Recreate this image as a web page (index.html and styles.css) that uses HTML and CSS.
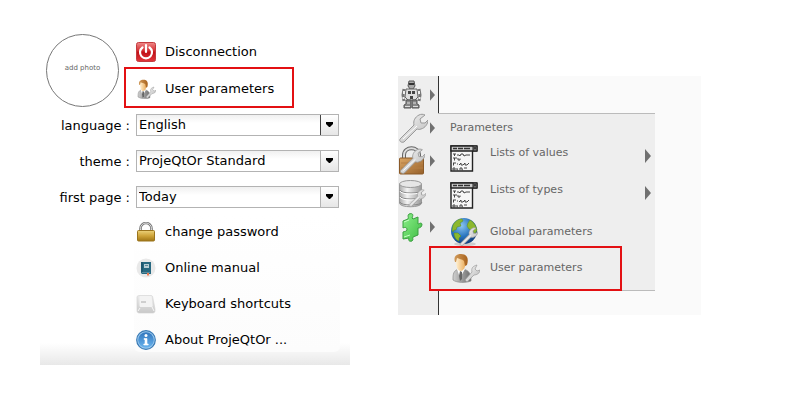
FILE: index.html
```
<!DOCTYPE html>
<html lang="en">
<head>
<meta charset="utf-8">
<title>User parameters</title>
<link rel="stylesheet" href="styles.css">
</head>
<body>
<svg class="defs" width="0" height="0" aria-hidden="true">
  <defs>
    <linearGradient id="red" x1="0" y1="0" x2="0" y2="1"><stop offset="0" stop-color="#ef8a8a"/><stop offset=".45" stop-color="#d42a2e"/><stop offset=".5" stop-color="#c00f16"/><stop offset="1" stop-color="#e2383c"/></linearGradient>
    <linearGradient id="gold" x1="0" y1="0" x2="0" y2="1"><stop offset="0" stop-color="#ecd27a"/><stop offset=".5" stop-color="#cfa53a"/><stop offset="1" stop-color="#a07514"/></linearGradient>
    <linearGradient id="bronze" x1="0" y1="0" x2="1" y2="1"><stop offset="0" stop-color="#dca765"/><stop offset="1" stop-color="#96602a"/></linearGradient>
    <linearGradient id="steel" x1="0" y1="0" x2="1" y2="1"><stop offset="0" stop-color="#fafafa"/><stop offset="1" stop-color="#b5b5b5"/></linearGradient>
    <linearGradient id="drum" x1="0" y1="0" x2="1" y2="0"><stop offset="0" stop-color="#aaa"/><stop offset=".35" stop-color="#f3f3f3"/><stop offset="1" stop-color="#999"/></linearGradient>
    <linearGradient id="blue" x1="0" y1="0" x2="0" y2="1"><stop offset="0" stop-color="#3176bd"/><stop offset="1" stop-color="#6ab4ee"/></linearGradient>
    <linearGradient id="key" x1="0" y1="0" x2="0" y2="1"><stop offset="0" stop-color="#ececec"/><stop offset="1" stop-color="#c9c9c9"/></linearGradient>
    <radialGradient id="sea" cx=".4" cy=".3" r=".7"><stop offset="0" stop-color="#8cc6f2"/><stop offset=".6" stop-color="#2873bd"/><stop offset="1" stop-color="#12417f"/></radialGradient>
    <linearGradient id="face" x1="0" y1="0" x2="1" y2="0"><stop offset="0" stop-color="#fff0d2"/><stop offset="1" stop-color="#e8a650"/></linearGradient>
    <linearGradient id="hair" x1="0" y1="0" x2="1" y2="0"><stop offset="0" stop-color="#d09a5a"/><stop offset="1" stop-color="#a8621c"/></linearGradient>
    <linearGradient id="suit" x1="0" y1="0" x2="1" y2="0"><stop offset="0" stop-color="#d0d0d0"/><stop offset="1" stop-color="#6b6b6b"/></linearGradient>
    <linearGradient id="green" x1="0" y1="0" x2="1" y2="1"><stop offset="0" stop-color="#8df08a"/><stop offset="1" stop-color="#3dbb42"/></linearGradient>
  </defs>
  <symbol id="spanner" viewBox="0 0 30 30">
    <path d="M2 26 16 12C15 8 17 4 21 2c2-1 4-1 6 0l-5 4 1 4 4 0 3-3c0 4-3 8-7 9-2 1-3 0-4 0L6 29c-3 1-5-1-4-3Z" fill="url(#steel)" stroke="#999" stroke-width="1"/>
    <path d="M5 26 19 13" stroke="#fff" stroke-width="1" fill="none"/>
  </symbol>
  <symbol id="user" viewBox="0 0 30 30">
    <path d="M3 25c0-6 2-8 6-9h4c5 1 8 4 8 10v2c-5 2-14 2-18-1Z" fill="url(#suit)" stroke="#888" stroke-width=".7"/>
    <path d="m7 16 3 9 5-9Z" fill="#fff"/><path d="m10 18 2 1v7l-2 2-1-5Z" fill="#666"/>
    <path d="M6 7c0-4 2-5 6-5 4 0 5 3 4 8-1 5-3 8-5 8-4 0-5-5-5-11Z" fill="url(#face)"/>
    <path d="M5 9C3 3 7 1 11 1c6 0 8 4 6 11l-2 1-1-5C12 6 9 6 7 5L6 9Z" fill="url(#hair)"/>
    <path d="m15 27 7-8c-1-4 1-6 5-7l-2 4 2 2 3-1c0 3-3 5-6 5l-7 7Z" fill="url(#steel)" stroke="#999" stroke-width=".7"/>
  </symbol>
  <symbol id="list" viewBox="0 0 28 28">
    <path d="M1 1h21.500v25H1Z" fill="#f6f6f6" stroke="#222" stroke-width="1.400"/>
    <path d="M1 1h26v5H1Z" fill="#ccc" stroke="#222" stroke-width="1.400"/>
    <path d="M23 1h4v5h-4Z" fill="#777" stroke="#222"/><path d="M24 2.500h2l-1 2Z" fill="#000"/>
    <path d="M3 3.500h4M8 3.500h5M14 3.500h6" stroke="#333" stroke-width="1.500"/>
    <g fill="none" stroke="#444" stroke-width="1"><path d="M3 9h3M4.500 9v2M7 10h2l1 1 1-2h2l1 2 2-1h4M3 13h4M4.500 13v2.500M8 13v2h2v-1.500M3 18h3M3.500 18v2.500M7 19h1M9 20l2-2v2h2l2-2v2h2l2-2M3 23h2v2H3ZM7 23v2h1M10 25v-2h2v2h1M14 23h3"/></g>
  </symbol>
  <symbol id="arrow" viewBox="0 0 6 14"><path d="M0 0 6 7 0 14Z" fill="#707070"/></symbol>
</svg>

<main class="page">
  <section class="account">
    <div class="profile">
      <button class="photo" type="button">add photo</button>
      <div class="profile-links">
        <a class="item" href="#disconnect">
          <svg class="icon" viewBox="0 0 20 20"><rect x=".5" y=".5" width="19" height="19" rx="2" fill="url(#red)" stroke="#c43b3f"/><path d="M6.500 5.500a6 6 0 1 0 7 0" fill="none" stroke="#fff" stroke-width="2.200" stroke-linecap="round"/><path d="M10 3v7" stroke="#fff" stroke-width="2.200" stroke-linecap="round"/></svg>
          Disconnection
        </a>
        <a class="item item-marked" href="#user">
          <svg class="icon"><use href="#user"/></svg>
          User parameters
        </a>
      </div>
    </div>

    <form class="settings">
      <label for="language">language&nbsp;:</label>
      <span class="combo"><select id="language"><option>English</option></select><svg class="combo-arrow combo-active" viewBox="0 0 17 20"><path d="M5 7h7v2L9 12H8L5 9Z"/></svg></span>
      <label for="theme">theme&nbsp;:</label>
      <span class="combo"><select id="theme"><option>ProjeQtOr Standard</option></select><svg class="combo-arrow" viewBox="0 0 17 20"><path d="M5 7h7v2L9 12H8L5 9Z"/></svg></span>
      <label for="first">first page&nbsp;:</label>
      <span class="combo"><select id="first"><option>Today</option></select><svg class="combo-arrow" viewBox="0 0 17 20"><path d="M5 7h7v2L9 12H8L5 9Z"/></svg></span>
    </form>

    <nav class="links">
      <a class="item" href="#password">
        <svg class="icon" viewBox="0 0 20 20"><path d="M4.500 10V6.500a5.500 5.500 0 0 1 11 0V10" fill="none" stroke="#777" stroke-width="2.600"/><path d="M4.500 10V6.500a5.500 5.500 0 0 1 11 0V10" fill="none" stroke="#ddd" stroke-width="1"/><rect x="1.500" y="8.500" width="17" height="10.500" rx="1" fill="url(#gold)" stroke="#9a741d"/></svg>
        change password
      </a>
      <a class="item" href="#manual">
        <svg class="icon" viewBox="0 0 20 20"><circle cx="10" cy="10" r="9.500" fill="#e9e9e9"/><path d="M5 4h10v12H6l-1-1Z" fill="#286981"/><path d="M6 4v10" stroke="#174b60"/><path d="M8 6h5v4H8Z" fill="#b9ced5"/><path d="M9 7.500h3M6 14.500h8" stroke="#5c8b9b"/><path d="M11 15h2v3l-1-1-1 1Z" fill="#ee7950"/></svg>
        Online manual
      </a>
      <a class="item" href="#keyboard">
        <svg class="icon" viewBox="0 0 20 20"><path d="M4 1.500h11c1 0 1.500.5 1.700 1.500l2.300 12v2c0 1-1 2-2 2H3c-1 0-2-1-2-2V3c0-1 1-1.500 3-1.500Z" fill="url(#key)" stroke="#d2d2d2" stroke-width=".6"/><path d="M4.500 2H14c1 0 1.500.5 1.700 1.500l1 8c0 1-.5 1.500-1.500 1.500H5c-1 0-1.500-.5-1.500-1.500v-8c0-1 .5-1.500 1-1.500Z" fill="#f3f3f3"/><path d="M5 8h5" stroke="#aaa" stroke-width="1"/><path d="m16 13 2 4M4 14l-2 3" stroke="#f7f7f7"/></svg>
        Keyboard shortcuts
      </a>
      <a class="item" href="#about">
        <svg class="icon" viewBox="0 0 20 20"><circle cx="10" cy="10" r="9.300" fill="#9ecbef" stroke="#397ab5" stroke-width="1.200"/><circle cx="10" cy="10" r="7.800" fill="url(#blue)"/><circle cx="10" cy="5.500" r="1.500" fill="#fff"/><path d="M8 8.500h3v5.500h1.200v1H7.800v-1H9V9.500H8Z" fill="#fff" stroke="#fff" stroke-width=".6"/></svg>
        About ProjeQtOr ...
      </a>
    </nav>
  </section>

  <section class="workspace">
    <nav class="sidebar">
      <a class="tool" href="#automation" aria-label="Automation">
        <svg class="tool-icon" viewBox="0 0 30 30"><path d="M11 1h5l1 5-2 3h-3l-2-3Z" fill="#aaa" stroke="#555"/><path d="M11 4h5" stroke="#333" stroke-width="2"/><path d="M8 9h11l1 8-3 3h-7l-3-3Z" fill="#ddd" stroke="#666"/><path d="M10 11h3v3h-3ZM14 11h3v3h-3ZM12 16h3v3h-3Z" fill="#444"/><path d="M6 9 5 15l1 6M21 9l1 6-1 6" fill="none" stroke="#777" stroke-width="3"/><path d="M6 11v3M21 11v3M5.500 17v2M21.500 17v2" stroke="#eee" stroke-width="2"/><path d="M8 20h5v8H6v-3l2-1ZM14 20h5v4l2 1v3h-7Z" fill="#888" stroke="#555"/><path d="M9 23h3M15 23h3M7 26.500h5M15 26.500h5" stroke="#ddd"/></svg>
        <svg class="arrow"><use href="#arrow"/></svg>
      </a>
      <a class="tool" href="#parameters" aria-label="Parameters">
        <svg class="tool-icon"><use href="#spanner"/></svg>
        <svg class="arrow"><use href="#arrow"/></svg>
      </a>
      <a class="tool" href="#rights" aria-label="Access rights">
        <svg class="tool-icon" viewBox="0 0 30 30"><path d="M6 13V9c0-9 15-9 15 0v4" fill="none" stroke="#666" stroke-width="4"/><path d="M6 13V9c0-9 15-9 15 0v4" fill="none" stroke="#ddd" stroke-width="2"/><rect x="1.500" y="12" width="24" height="16" rx="1" fill="url(#bronze)" stroke="#8b5a28"/><path d="M3 17h22M3 22h22" stroke="#b57e44"/><use href="#spanner" x="1" y="2" width="26" height="26"/></svg>
        <svg class="arrow"><use href="#arrow"/></svg>
      </a>
      <a class="tool" href="#data" aria-label="Data">
        <svg class="tool-icon" viewBox="0 0 30 30"><path d="M1.500 5v19c0 5 22 5 22 0V5Z" fill="url(#drum)" stroke="#999"/><ellipse cx="12.500" cy="5" rx="11" ry="3.500" fill="#e6e6e6" stroke="#999"/><path d="M2 11c0 4 22 4 22 0M2 17c0 4 22 4 22 0M2 23c0 4 22 4 22 0" fill="none" stroke="#888"/><path d="M2 12c0 4 22 4 22 0M2 18c0 4 22 4 22 0" fill="none" stroke="#fff"/><use href="#spanner" x="10" y="10" width="18" height="18"/></svg>
      </a>
      <a class="tool" href="#plugins" aria-label="Plugins">
        <svg class="tool-icon" viewBox="0 0 30 30"><path d="m5 9 5-2c1-2-1-3 1-5 3-1 5 0 3 4l1 1 5-2v7c1 0 3-2 4 0 0 3-2 4-4 4v7l-5 2c-1 2 1 2-1 4-3 1-4-1-3-3l-6 1v-7c2-1 3 0 4-2 0-3-2-3-4-2Z" fill="url(#green)" stroke="#3b9f40"/><path d="m6 10 5-2M12 23l-6 2" stroke="#c4ffc2"/></svg>
        <svg class="arrow"><use href="#arrow"/></svg>
      </a>
    </nav>

    <nav class="submenu">
      <h2 class="submenu-title">Parameters</h2>
      <a class="entry entry-list" href="#values"><svg class="list-icon"><use href="#list"/></svg><span class="entry-text">Lists of values</span><svg class="arrow"><use href="#arrow"/></svg></a>
      <a class="entry entry-list" href="#types"><svg class="list-icon"><use href="#list"/></svg><span class="entry-text">Lists of types</span><svg class="arrow"><use href="#arrow"/></svg></a>
      <a class="entry" href="#global">
        <svg class="entry-icon" viewBox="0 0 30 30"><ellipse cx="15" cy="27" rx="11" ry="2" fill="#ccc"/><circle cx="14" cy="14" r="13" fill="url(#sea)"/><path d="M3 8c3-5 6-6 9-6l1 2-3 2 1 3-4 1-1 3-2 0-1 2-1-2ZM4 16l4 0 3 3-2 2 0 3c-3-1-5-4-5-8ZM18 6l2-3c4 2 6 6 7 10l-2 4-3-4-3-1-2-3Z" fill="#8cb82e" stroke="#588a21" stroke-width=".5"/><use href="#spanner" x="9" y="10" width="19" height="19"/></svg>
        <span class="entry-text">Global parameters</span>
      </a>
      <a class="entry entry-marked" href="#user"><svg class="entry-icon"><use href="#user"/></svg><span class="entry-text">User parameters</span></a>
    </nav>
  </section>
</main>
</body>
</html>
```
FILE: styles.css
```
* { box-sizing: border-box; }
body {
  margin: 0;
  background: #fff;
  color: #000;
  font: 13px/16px "DejaVu Sans", sans-serif;
}
a { color: inherit; text-decoration: none; }
svg { display: block; flex: none; }
.defs { position: absolute; }

.page {
  display: grid;
  grid-template-columns: 310fr 303fr;
  gap: 48px;
  align-items: start;
  padding: 34px 99px 35px 40px;
}

.account {
  padding-bottom: 13px;
  background: linear-gradient(to top, #e8e8e8, #fff 22px);
}
.profile { display: flex; gap: 5px; padding-left: 6px; }
.photo {
  flex: none;
  width: 73px;
  height: 73px;
  padding: 0 0 6px;
  border: 1px solid #777;
  border-radius: 50%;
  background: #fff;
  color: #666;
  font: 7px/10px "DejaVu Sans", sans-serif;
}
.item {
  display: flex;
  align-items: center;
  gap: 9px;
  height: 24px;
  white-space: nowrap;
}
.icon { width: 20px; height: 20px; }
.profile-links .item { height: 33px; padding: 2px 12px 0; }
.profile-links .item-marked {
  width: 170px;
  height: 41px;
  padding: 2px 10px 0;
  border: 2px solid #e31013;
}

.settings {
  display: grid;
  grid-template-columns: 90px 1fr;
  gap: 14px 6px;
  align-items: center;
  padding: 6px 11px 6px 0;
}
.settings label { padding-top: 2px; text-align: right; white-space: nowrap; }
.combo {
  display: flex;
  height: 22px;
  border: 1px solid #b3b3b3;
  background: linear-gradient(#f0f0f0, #fff 8px);
}
.combo select {
  flex: 1;
  min-width: 0;
  padding: 0 2px;
  border: 0;
  appearance: none;
  background: none;
  color: #000;
  font: inherit;
}
.combo-arrow {
  width: 18px;
  height: 20px;
  border-left: 1px solid #b3b3b3;
  background: linear-gradient(#fff, #e6e6e6);
}
.combo-active { border-left-color: #444; }

.links {
  display: grid;
  gap: 12px;
  margin: 0 10px 0 94px;
  padding: 6px 2px 0;
  border-radius: 6px;
  background: linear-gradient(#fff, #fcfcfc);
}

.workspace {
  display: flex;
  align-items: flex-start;
  margin-top: 42px;
  background: #fafafa;
  color: #666;
  font-size: 11px;
}
.sidebar {
  flex: none;
  width: 41px;
  padding: 2px 0 72px;
  border-right: 1px solid #333;
  background: #eee;
}
.tool { display: flex; align-items: center; gap: 2px; height: 33px; }
.tool-icon, .entry-icon { width: 30px; height: 30px; }
.arrow { width: 6px; height: 14px; }
.tool .arrow { width: 5px; }

.submenu {
  position: relative;
  flex: 1;
  margin: 37px 46px 0 -1px;
  padding-bottom: 4px;
  border: solid #bbb;
  border-width: 1px 0;
  background: #eee;
}
.submenu-title {
  margin: 0;
  padding: 6px 12px 4px;
  font: inherit;
}
.entry {
  display: flex;
  align-items: center;
  gap: 10px;
  height: 36px;
  padding: 0 4px 0 12px;
}
.entry-text { flex: 1; white-space: nowrap; }
.entry-list { align-items: flex-start; gap: 12px; height: 37px; padding-top: 5px; }
.list-icon { width: 28px; height: 28px; }
.entry-list .arrow { margin-top: 4px; }
.entry-marked { position: relative; }
.entry-marked::after {
  content: "";
  position: absolute;
  inset: -4px 33px -5px -9px;
  border: 2px solid #e31013;
}
```
